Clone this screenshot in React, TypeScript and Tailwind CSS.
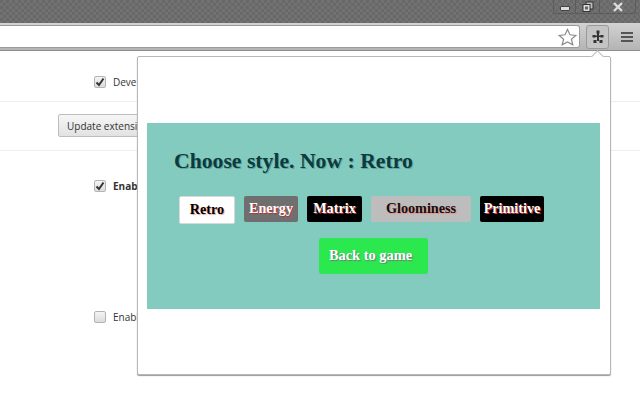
const styleButtons = [
  { label: "Retro", box: "w-[56px] h-[28px] bg-white border border-[#d8d8d8] text-black [text-shadow:1px_1px_1px_#f0a0a0]", gap: "ml-0" },
  { label: "Energy", box: "w-[54px] h-[26px] bg-[#6f6f6f] text-white [text-shadow:1px_1px_0_#b33]", gap: "ml-[9px]" },
  { label: "Matrix", box: "w-[55px] h-[26px] bg-black text-white [text-shadow:1px_1px_0_#a33]", gap: "ml-[9px]" },
  { label: "Gloominess", box: "w-[100px] h-[26px] bg-[#bdbdbd] text-[#111] [text-shadow:1px_1px_1px_#e88]", gap: "ml-[9px]" },
  { label: "Primitive", box: "w-[64px] h-[26px] bg-black text-white [text-shadow:1px_1px_0_#c33]", gap: "ml-[9px]" },
];

function Checkbox({ checked }: { checked?: boolean }) {
  return (
    <span className="flex items-center justify-center w-[12px] h-[12px] rounded-[2px] border border-[#b4b4b4] bg-gradient-to-b from-[#f4f4f4] to-[#dcdcdc]">
      {checked && (
        <svg width="10" height="10" viewBox="0 0 10 10">
          <path d="M1.5 5.5 L4 8 L8.5 1.5" fill="none" stroke="#333" strokeWidth="2" />
        </svg>
      )}
    </span>
  );
}

function WindowControls() {
  return (
    <div className="flex h-[14px] mr-[4px] border border-t-0 border-[#5c5c5c] rounded-b-[3px]">
      <div className="flex items-center justify-center w-[22px] border-r border-[#5c5c5c]">
        <span className="w-[10px] h-[5px] mt-[3px] bg-[#ddd] border border-[#444] rounded-[1px]" />
      </div>
      <div className="flex items-center justify-center w-[24px] border-r border-[#5c5c5c]">
        <svg width="12" height="12" viewBox="0 0 12 12">
          <rect x="4" y="1" width="7" height="7" fill="#bbb" stroke="#333" />
          <rect x="1" y="3.5" width="7" height="7" fill="#ddd" stroke="#333" />
          <rect x="3" y="5.5" width="3" height="3" fill="#666" />
        </svg>
      </div>
      <div className="flex items-center justify-center w-[35px]">
        <svg width="12" height="10" viewBox="0 0 12 10">
          <path d="M2 1 L10 9 M10 1 L2 9" stroke="#ddd" strokeWidth="2.4" />
        </svg>
      </div>
    </div>
  );
}

export default function App() {
  return (
    <div className="relative w-[640px] h-[400px] overflow-hidden bg-white font-['Liberation_Sans',sans-serif]">
      {/* Title bar */}
      <div className="flex justify-end h-[23px] bg-[#6e6e6e] bg-[repeating-conic-gradient(#727272_0%_25%,#686868_0%_50%)] bg-[length:6px_6px]">
        <WindowControls />
      </div>

      {/* Toolbar */}
      <div className="flex items-center h-[28px] bg-gradient-to-b from-[#d2d2d2] to-[#b4b4b4] border-b border-[#8e8e8e]">
        <div className="flex items-center justify-end w-[580px] h-[23px] pr-[2px] bg-white border border-l-0 border-[#9a9a9a] rounded-r-[3px]">
          <svg width="19" height="18" viewBox="0 0 19 18">
            <path d="M9.5 1.5 L12 6.8 L17.8 7.4 L13.4 11.2 L14.8 16.8 L9.5 13.9 L4.2 16.8 L5.6 11.2 L1.2 7.4 L7 6.8 Z" fill="#fff" stroke="#8a8a8a" strokeWidth="1.2" />
          </svg>
        </div>
        <div className="flex items-center justify-center w-[23px] h-[24px] ml-[6px] rounded-[3px] bg-[#c4c4c4] border border-[#9a9a9a]">
          <svg width="14" height="14" viewBox="0 0 14 14" fill="#333">
            <rect x="5.5" y="0.5" width="3" height="3" />
            <rect x="1.5" y="5" width="3" height="2.5" />
            <rect x="9.5" y="5" width="3" height="2.5" />
            <rect x="6" y="3" width="2" height="8" />
            <rect x="4" y="5.5" width="6" height="1.5" />
            <rect x="2.5" y="10" width="3" height="3" />
            <rect x="8.5" y="10" width="3" height="3" />
          </svg>
        </div>
        <div className="flex flex-col gap-[2px] w-[12px] ml-[12px]">
          <span className="h-[2px] bg-[#555]" />
          <span className="h-[2px] bg-[#555]" />
          <span className="h-[2px] bg-[#555]" />
        </div>
      </div>

      {/* Extensions page behind the popup */}
      <div className="text-[10px] leading-[12px] text-[#333] font-['Open_Sans','Noto_Sans',sans-serif]">
        <div className="flex items-center gap-[7px] h-[51px] pl-[94px] pt-[20px] pb-[8px] border-b border-[#eeeeee]">
          <Checkbox checked />
          <span>Developer mode</span>
        </div>
        <div className="flex items-center h-[49px] pl-[58px] pb-[1px] border-b border-[#eeeeee]">
          <button className="h-[23px] w-[120px] pl-[8px] text-left whitespace-nowrap overflow-hidden border border-[#bdbdbd] rounded-[2px] bg-gradient-to-b from-[#f6f6f6] to-[#e2e2e2]">
            Update extensions now
          </button>
        </div>
        <div className="flex items-center gap-[7px] pl-[94px] pt-[29px]">
          <Checkbox checked />
          <span className="font-bold">Enabled</span>
        </div>
        <div className="flex items-center gap-[7px] pl-[94px] pt-[119px]">
          <Checkbox />
          <span>Enable</span>
        </div>
      </div>

      {/* Popup */}
      <div className="absolute left-[137px] top-[56px] w-[474px] h-[319px] bg-white border border-[#b8b8b8] rounded-[2px] shadow-[0_1px_1px_#999] pl-[9px] pt-[66px]">
        <div className="absolute -top-[5px] left-[455px] w-[9px] h-[9px] rotate-45 bg-white border-l border-t border-[#b8b8b8]" />
        <div className="w-[453px] h-[186px] bg-[#83cbbf] font-['Liberation_Serif',serif] font-bold">
          <h1 className="pl-[27px] pt-[24px] h-[73px] text-[21.7px] leading-[28px] text-[#0d3a3c] [text-shadow:1px_1px_0_#5fa5a0]">
            Choose style. Now : Retro
          </h1>
          <div className="flex items-start pl-[32px] text-[14.2px]">
            {styleButtons.map((b) => (
              <div key={b.label} className={`flex items-center justify-center rounded-[2px] ${b.box} ${b.gap}`}>
                {b.label}
              </div>
            ))}
          </div>
          <div className="flex justify-center mt-[14px] pr-[1px]">
            <div className="flex items-center justify-center w-[109px] h-[36px] pr-[5px] rounded-[3px] bg-[#2ae84e] text-white text-[14.4px] [text-shadow:1px_1px_1px_#777]">
              Back to game
            </div>
          </div>
        </div>
      </div>
    </div>
  );
}
